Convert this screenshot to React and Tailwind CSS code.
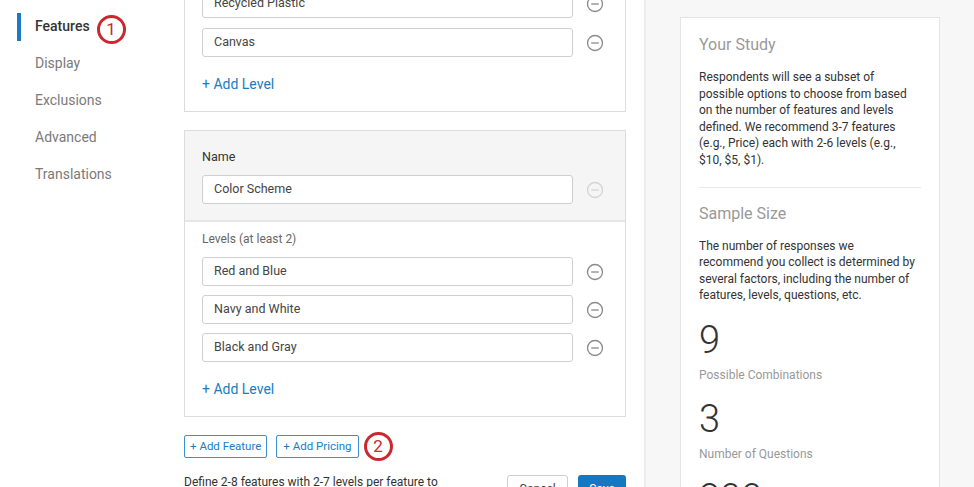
import React from 'react';

const font = { fontFamily: 'Roboto, "Open Sans", Arial, sans-serif' };

function MinusIcon({ faded }) {
  return (
    <svg width="18" height="18" viewBox="0 0 18 18" className={faded ? 'opacity-30' : ''}>
      <circle cx="9" cy="9" r="7.5" fill="none" stroke="#8a8a8a" strokeWidth="1.3" />
      <line x1="5.2" y1="9" x2="12.8" y2="9" stroke="#8a8a8a" strokeWidth="1.3" />
    </svg>
  );
}

function Badge({ n }) {
  return (
    <div className="w-[29px] h-[29px] rounded-full border-[3px] border-[#c8282e] bg-white flex items-center justify-center text-[#c8282e] text-[17px] leading-none">
      {n}
    </div>
  );
}

function LevelRow({ value, faded }) {
  return (
    <div className="flex items-center">
      <div className="w-[371px] h-[29px] border border-[#cfcfcf] rounded-[3px] bg-white flex items-center px-[11px] text-[12.5px] text-[#444]">
        {value}
      </div>
      <div className="ml-[13px]">
        <MinusIcon faded={faded} />
      </div>
    </div>
  );
}

const nav = ['Features', 'Display', 'Exclusions', 'Advanced', 'Translations'];

export default function App() {
  return (
    <div className="w-[974px] h-[487px] overflow-hidden bg-white flex" style={font}>
      {/* sidebar */}
      <div className="w-[184px] shrink-0 pt-[8px]">
        {nav.map((item, i) => (
          <div key={item} className="flex items-center h-[37px]">
            <div className={`w-[4px] h-[28px] ml-[17px] ${i === 0 ? 'bg-[#1a7cc4]' : ''}`} />
            <span className={`ml-[14px] text-[14px] ${i === 0 ? 'text-[#333] font-medium' : 'text-[#7a7a7a]'}`}>{item}</span>
            {i === 0 && (
              <div className="ml-[7px] mt-[5px]">
                <Badge n="1" />
              </div>
            )}
          </div>
        ))}
      </div>

      {/* main */}
      <div className="w-[442px] shrink-0">
        <div className="-mt-[11px] border border-[#dcdcdc] border-t-0 px-[17px] pb-[17px]">
          <div className="flex flex-col gap-[10px]">
            <LevelRow value="Recycled Plastic" />
            <LevelRow value="Canvas" />
          </div>
          <div className="mt-[17px] text-[14px] text-[#1a7cc4] leading-[20px]">+ Add Level</div>
        </div>

        <div className="mt-[18px] border border-[#dcdcdc]">
          <div className="bg-[#f5f5f5] border-b-2 border-[#e6e6e6] px-[17px] pt-[19px] pb-[16px]">
            <div className="text-[12.5px] text-[#333] leading-[14px]">Name</div>
            <div className="mt-[11px]">
              <LevelRow value="Color Scheme" faded />
            </div>
          </div>
          <div className="px-[17px] pt-[10px] pb-[17px]">
            <div className="text-[12px] text-[#666] leading-[14px]">Levels (at least 2)</div>
            <div className="mt-[11px] flex flex-col gap-[9px]">
              <LevelRow value="Red and Blue" />
              <LevelRow value="Navy and White" />
              <LevelRow value="Black and Gray" />
            </div>
            <div className="mt-[17px] text-[14px] text-[#1a7cc4] leading-[20px]">+ Add Level</div>
          </div>
        </div>

        <div className="mt-[15px] flex items-center">
          <div className="h-[23px] px-[5px] border border-[#3a8fd0] rounded-[2px] text-[11.5px] text-[#1a7cc4] flex items-center">+ Add Feature</div>
          <div className="ml-[9px] h-[23px] px-[6px] border border-[#3a8fd0] rounded-[2px] text-[11.5px] text-[#1a7cc4] flex items-center">+ Add Pricing</div>
          <div className="ml-[5px]">
            <Badge n="2" />
          </div>
        </div>

        <div className="mt-[13px] flex items-start">
          <div className="text-[12px] text-[#333] leading-[16px] w-[290px]">Define 2-8 features with 2-7 levels per feature to</div>
          <div className="ml-auto flex gap-[10px] mt-[1px]">
            <div className="w-[61px] h-[28px] border border-[#cfcfcf] rounded-[3px] bg-white text-[12px] text-[#444] flex items-center justify-center">Cancel</div>
            <div className="w-[48px] h-[28px] rounded-[3px] bg-[#1678c0] text-[12px] text-white flex items-center justify-center">Save</div>
          </div>
        </div>
      </div>

      {/* divider + right panel */}
      <div className="w-[18px] shrink-0" />
      <div className="flex-1 bg-[#f7f7f7] border-l-2 border-[#ececec] pl-[34px] pt-[17px]">
        <div className="w-[260px] h-[500px] bg-white border border-[#e4e4e4] px-[18px] pt-[17px]">
          <div className="text-[16px] text-[#999] leading-[20px]">Your Study</div>
          <p className="mt-[14px] text-[12px] text-[#333] leading-[16.6px]">
            Respondents will see a subset of possible options to choose from based on the number of features and levels defined. We recommend 3-7 features (e.g., Price) each with 2-6 levels (e.g., $10, $5, $1).
          </p>
          <div className="mt-[18px] border-t border-[#e8e8e8]" />
          <div className="mt-[16px] text-[16px] text-[#999] leading-[20px]">Sample Size</div>
          <p className="mt-[14px] text-[12px] text-[#333] leading-[16.6px]">
            The number of responses we recommend you collect is determined by several factors, including the number of features, levels, questions, etc.
          </p>
          <div className="mt-[16px] text-[38px] font-light text-[#333] leading-[40px]">9</div>
          <div className="mt-[7px] text-[12px] text-[#999] leading-[16px]">Possible Combinations</div>
          <div className="mt-[16px] text-[38px] font-light text-[#333] leading-[40px]">3</div>
          <div className="mt-[7px] text-[12px] text-[#999] leading-[16px]">Number of Questions</div>
          <div className="mt-[16px] text-[38px] font-light text-[#333] leading-[40px]">300</div>
        </div>
      </div>
    </div>
  );
}
